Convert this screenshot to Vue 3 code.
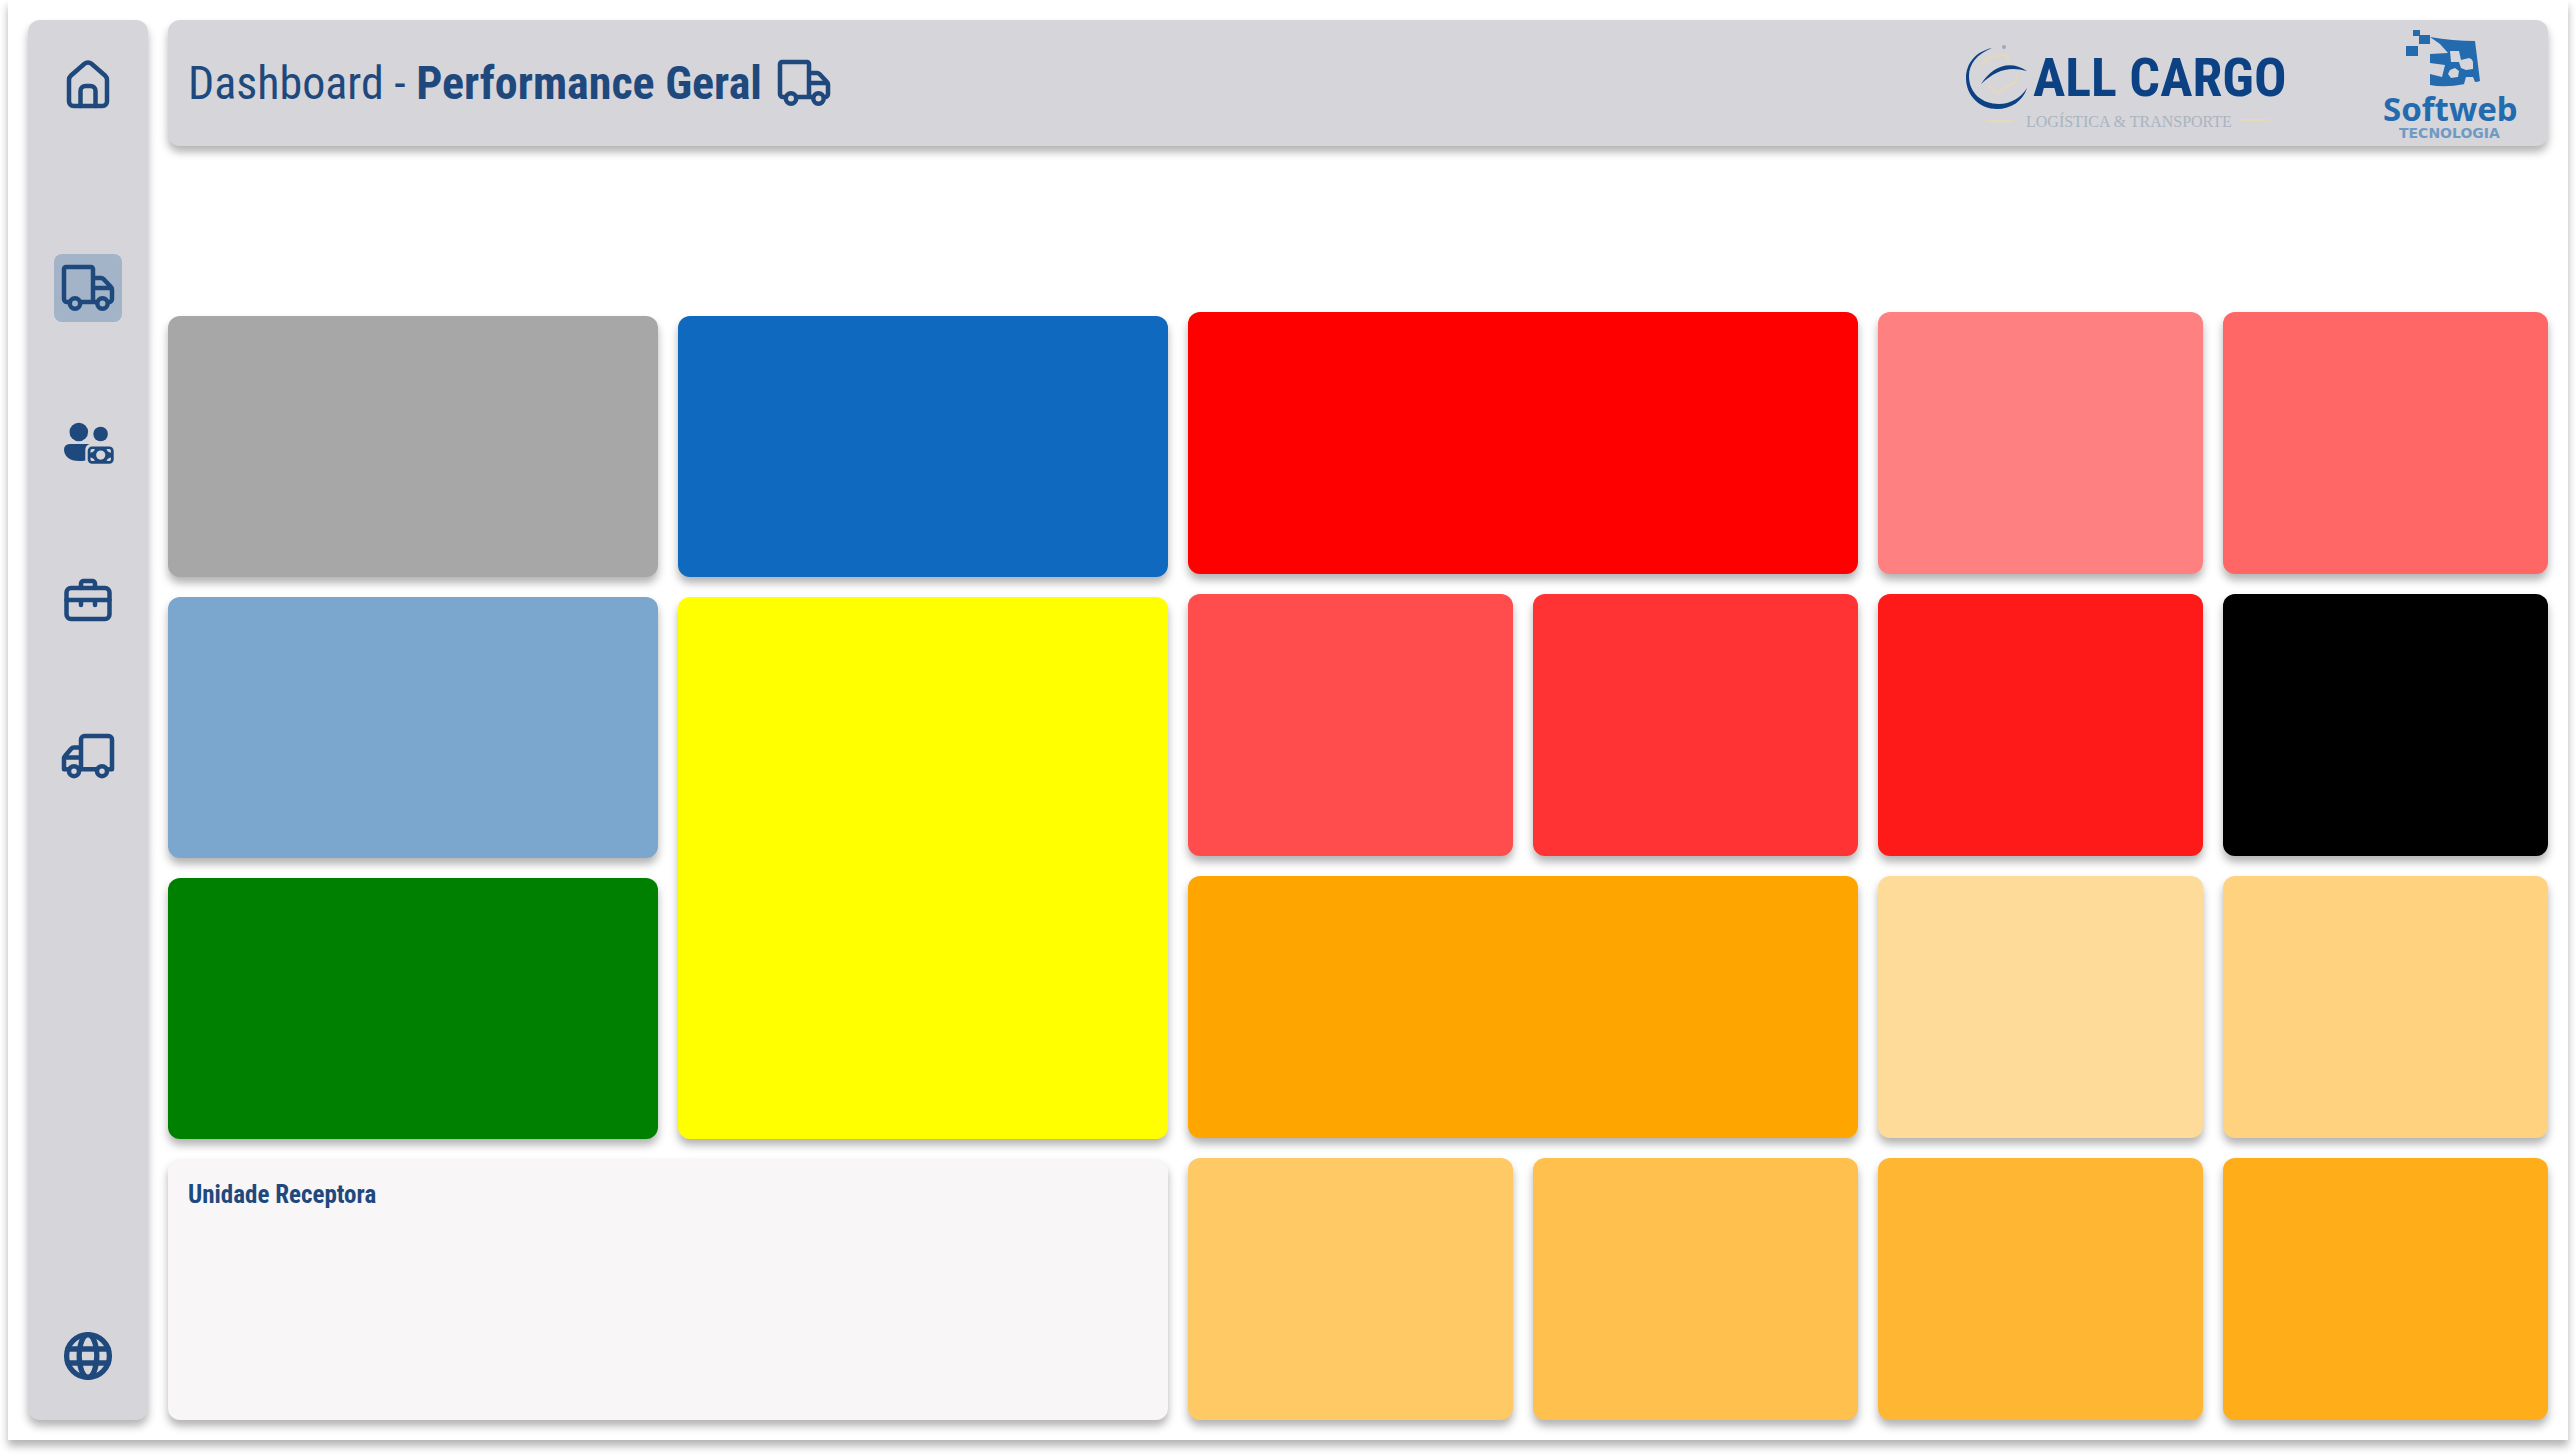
<template>
  <div class="page">
    <nav class="sidebar" aria-label="Menu">
      <a
        v-for="item in menu"
        :key="item.name"
        href="#"
        class="nav-link"
        :class="[item.name, { active: item.name === current }]"
        :aria-label="item.label"
        @click.prevent="current = item.name"
      >
        <svg class="icon" viewBox="0 0 56 56">
          <template v-if="item.name === 'home'">
            <path d="M9 24a6 6 0 0 1 2-4.500L24.500 7.800a5.500 5.500 0 0 1 7 0L45 19.500a6 6 0 0 1 2 4.500v21.500a4.500 4.500 0 0 1-4.500 4.500h-29A4.500 4.500 0 0 1 9 45.500z" />
            <path d="M20.500 50V35a5 5 0 0 1 5-5h5a5 5 0 0 1 5 5v15" />
          </template>
          <template v-else-if="item.name === 'performance'">
            <path :d="truckPath" />
            <circle cx="15" cy="43.500" r="5.200" />
            <circle cx="42.500" cy="43.500" r="5.200" />
          </template>
          <template v-else-if="item.name === 'clients'">
            <g class="solid">
              <circle cx="18.800" cy="16" r="9.300" />
              <circle cx="40.600" cy="18" r="7.300" />
              <path d="M9.500 28h20q-4.200 1.600-4.200 6v10.500q-2.800.600-6 .600C9.500 45.100 4 40 4 33.500A5.500 5.500 0 0 1 9.500 28z" />
              <rect x="27.700" y="30.400" width="26" height="17.400" rx="4.500" />
            </g>
            <g class="cutout">
              <circle cx="40.700" cy="39.100" r="4.600" />
              <path d="M30.500 36.800v-2.100q0-1.600 1.600-1.600h2.700q-.600 3.200-4.300 3.700zM50.900 36.800v-2.100q0-1.600-1.600-1.600h-2.700q.600 3.200 4.300 3.700zM30.500 41.400v2.100q0 1.600 1.600 1.600h2.700q-.600-3.200-4.300-3.700zM50.900 41.400v2.100q0 1.600-1.600 1.600h-2.700q.600-3.200 4.300-3.700z" />
            </g>
          </template>
          <template v-else-if="item.name === 'business'">
            <rect x="6.500" y="16" width="43" height="31" rx="4.500" />
            <path d="M21 16v-4.500A2.500 2.500 0 0 1 23.500 9h9a2.500 2.500 0 0 1 2.500 2.500V16M6.500 28h43M21 28v5M35 28v5" />
          </template>
          <template v-else-if="item.name === 'fleet'">
            <path d="M7 41.200H4V30q0-1 1-2l6-7q1.300-1.500 3-1.500h7M4 29.500h17M21 41.200V11.500A3.500 3.500 0 0 1 24.500 8h24a3.500 3.500 0 0 1 3.500 3.500v29.700h-3M20 41.200h16" />
            <circle cx="14" cy="43.200" r="5" />
            <circle cx="42" cy="43.200" r="5" />
          </template>
          <g v-else class="globe">
            <circle cx="28" cy="28" r="21.400" />
            <ellipse cx="28" cy="28" rx="8.800" ry="21.400" />
            <path d="M8 21h40M8 35h40" />
          </g>
        </svg>
      </a>
    </nav>

    <main class="content">
      <header class="header">
        <h1 class="title">
          <span>Dashboard - <strong>Performance Geral</strong></span>
          <svg class="icon" viewBox="0 0 56 56" aria-hidden="true">
            <path :d="truckPath" />
            <circle cx="15" cy="43.500" r="5.200" />
            <circle cx="42.500" cy="43.500" r="5.200" />
          </svg>
        </h1>
        <div class="brands">
          <svg class="brand-cargo" viewBox="0 0 328 126" role="img" aria-label="All Cargo">
            <path class="cargo-fill" d="M32 28C14 32 6 45 6 58c0 18 14 31 31 31 14 0 26-8 30-21-6 10-17 16-28 16C22 84 9 73 9 56 9 44 17 34 32 28z" />
            <path class="cargo-fill" d="M21 64C33 45 51 40 67 51 49 46 36 50 21 64z" />
            <circle class="cargo-dot" cx="44" cy="27" r="2" />
            <path class="cargo-line" d="M21 45l8-7 17-4 3 8M28 66l9 7 19-12 2-8M26 101h28M281 100h28" />
            <text class="cargo-name" x="73" y="76">ALL CARGO</text>
            <text class="cargo-tag" x="66" y="107">LOGÍSTICA &amp; TRANSPORTE</text>
          </svg>
          <svg class="brand-softweb" viewBox="0 0 160 126" role="img" aria-label="Softweb Tecnologia">
            <g class="softweb-fill">
              <path d="M45 10h7v6h-7zM51 15h11v9H51zM38 26h12v10H38z" />
              <path d="M62 17q23 4 45 4l5 40q-5 2-9 0l-6 3q-20 4-35 1V54l12 3 3-12-15-2v-9l18-1-8-9z" />
            </g>
            <path class="softweb-hole" d="M82 31h9l2 9 8-2q4 1 4 5v6l-7 1-5-2-2-6h-8zM82 50l5-2 4 3-1 6-7 1-3-4zM98 57h7l2 5-2 4-9-2z" />
            <text class="softweb-name" x="15" y="101">Softweb</text>
            <text class="softweb-tag" x="31" y="118">TECNOLOGIA</text>
          </svg>
        </div>
      </header>

      <div class="board">
        <section class="summary">
          <div class="card gray"></div>
          <div class="card blue"></div>
          <div class="card light-blue"></div>
          <div class="card yellow"></div>
          <div class="card green"></div>
          <div class="card unit">
            <h2>Unidade Receptora</h2>
          </div>
        </section>
        <section class="ranges">
          <div
            v-for="card in ranges"
            :key="card.color"
            class="card"
            :class="{ wide: card.wide }"
            :style="{ background: card.color }"
          ></div>
        </section>
      </div>
    </main>
  </div>
</template>

<script setup>
import { ref } from 'vue'

const current = ref('performance')

const menu = [
  { name: 'home', label: 'Início' },
  { name: 'performance', label: 'Performance Geral' },
  { name: 'clients', label: 'Clientes' },
  { name: 'business', label: 'Negócios' },
  { name: 'fleet', label: 'Frota' },
  { name: 'web', label: 'Site' }
]

// shared by the menu and the page title
const truckPath = 'M9 42H7a3 3 0 0 1-3-3V9a2 2 0 0 1 2-2h25a2 2 0 0 1 2 2v33M21 42h15M33 18h8q1.500 0 2.500 1l7.500 8q1 1 1 2.500V39a3 3 0 0 1-3 3M33 28h18'

const ranges = [
  { color: '#ff0000', wide: true },
  { color: '#ff8080' },
  { color: '#ff6666' },
  { color: '#ff4d4d' },
  { color: '#ff3333' },
  { color: '#ff1a1a' },
  { color: '#000000' },
  { color: '#ffa500', wide: true },
  { color: '#ffdb99' },
  { color: '#ffd280' },
  { color: '#ffc966' },
  { color: '#ffc04d' },
  { color: '#ffb733' },
  { color: '#ffae1a' }
]
</script>

<style>
body {
  margin: 0;
  background: #fff;
}
</style>

<style scoped>
.page {
  --color-primary: #1f497d;
  --color-surface: #d6d5da;
  --shadow: 0 6px 8px rgba(0, 0, 0, 0.3);
  box-sizing: border-box;
  display: flex;
  gap: 20px;
  min-height: calc(100vh - 16px);
  margin: 0 8px 16px;
  padding: 20px;
  background: #fff;
  box-shadow: var(--shadow);
  color: var(--color-primary);
  font-family: "Roboto Condensed", "Liberation Sans Narrow", Roboto, sans-serif;
}

.sidebar {
  box-sizing: border-box;
  flex: none;
  display: flex;
  flex-direction: column;
  align-items: center;
  gap: 88px;
  width: 120px;
  padding: 30px 0;
  background: var(--color-surface);
  border-radius: 12px;
  box-shadow: var(--shadow);
}

.nav-link {
  display: flex;
  align-items: center;
  justify-content: center;
  width: 68px;
  height: 68px;
  border-radius: 8px;
  color: inherit;
}

.nav-link.active {
  background: #a3b4c8;
}

.nav-link.home {
  margin-bottom: 48px;
}

.nav-link.web {
  margin-top: auto;
}

.icon {
  flex: none;
  width: 56px;
  height: 56px;
  fill: none;
  stroke: currentColor;
  stroke-width: 4.5;
  stroke-linejoin: round;
  stroke-linecap: round;
}

.icon .solid {
  fill: currentColor;
  stroke: none;
}

.icon .cutout {
  fill: var(--color-surface);
  stroke: none;
}

.icon .globe {
  stroke-width: 5.3;
}

.content {
  flex: 1;
  min-width: 0;
  display: flex;
  flex-direction: column;
}

.header {
  display: flex;
  align-items: center;
  justify-content: space-between;
  padding: 0 20px;
  background: var(--color-surface);
  border-radius: 12px;
  box-shadow: var(--shadow);
}

.title {
  display: flex;
  align-items: center;
  gap: 14px;
  margin: 0;
  font-size: 46px;
  line-height: 56px;
  font-weight: 400;
}

.title strong {
  font-weight: 700;
}

.brands {
  display: flex;
  gap: 80px;
}

.brands svg {
  display: block;
  height: 126px;
}

.brand-cargo {
  width: 328px;
}

.brand-softweb {
  width: 160px;
}

.cargo-fill,
.cargo-name {
  fill: #0c4284;
}

.cargo-dot {
  fill: #9ba9bb;
}

.cargo-line {
  fill: none;
  stroke: #e6d9b8;
  stroke-width: 2;
}

.cargo-name {
  font-size: 54px;
  font-weight: 700;
}

.cargo-tag {
  fill: #a9b4c0;
  font-family: "Liberation Serif", serif;
  font-size: 16px;
}

.softweb-fill,
.softweb-name {
  fill: #236bae;
}

.softweb-hole {
  fill: var(--color-surface);
}

.softweb-name {
  font-family: "Noto Sans", sans-serif;
  font-size: 33px;
  font-weight: 700;
}

.softweb-tag {
  fill: #6f9ac4;
  font-family: "DejaVu Sans", sans-serif;
  font-size: 14px;
  font-weight: 700;
}

.board {
  flex: 1;
  display: grid;
  grid-template-columns: 25fr 34fr;
  gap: 20px;
  margin-top: 166px;
}

.summary,
.ranges {
  display: grid;
  grid-template-rows: repeat(4, 1fr);
  gap: 20px;
}

.summary {
  grid-template-columns: repeat(2, 1fr);
  padding-top: 4px;
}

.ranges {
  grid-template-columns: repeat(4, 1fr);
}

.card {
  border-radius: 12px;
  box-shadow: var(--shadow);
}

.gray { background: #a7a7a8; }
.blue { background: #0f6abf; }
.light-blue { background: #7ba6ce; }
.green { background: #008000; }

.yellow {
  grid-row: span 2;
  background: #ffff00;
}

.wide {
  grid-column: span 2;
}

.unit {
  grid-column: span 2;
  padding: 20px;
  background: #f8f6f7;
}

.unit h2 {
  margin: 0;
  font-size: 25px;
  line-height: 32px;
  font-weight: 700;
}
</style>
